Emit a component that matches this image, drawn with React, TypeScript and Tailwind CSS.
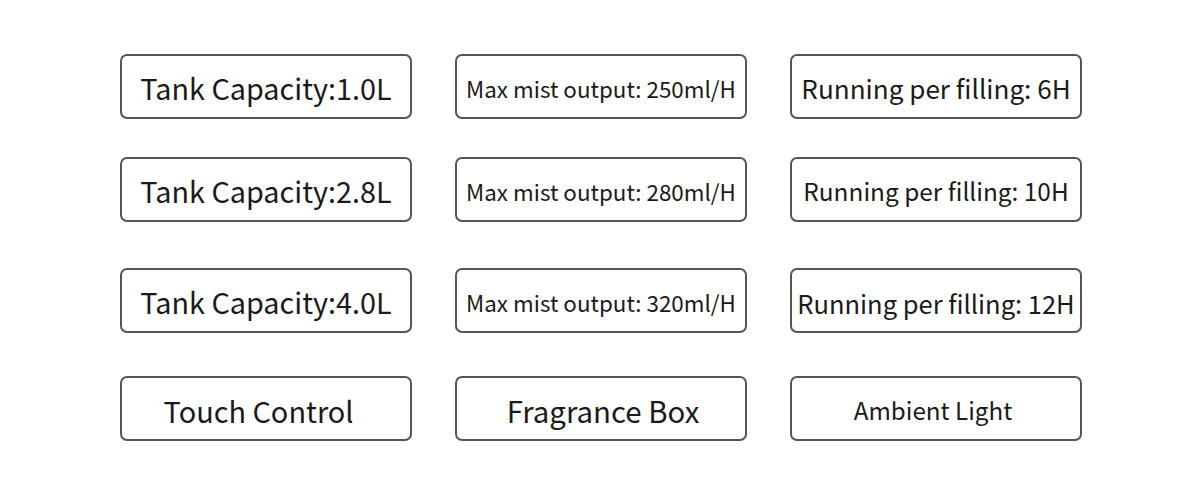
import React from "react";

type Item = { text: string; cls: string };

const rows: { mt: string; items: Item[] }[] = [
  {
    mt: "mt-[54px]",
    items: [
      { text: "Tank Capacity:1.0L", cls: "text-[28.8px]" },
      { text: "Max mist output: 250ml/H", cls: "text-[22.4px]" },
      { text: "Running per filling: 6H", cls: "text-[26.1px]" },
    ],
  },
  {
    mt: "mt-[38px]",
    items: [
      { text: "Tank Capacity:2.8L", cls: "text-[28.8px]" },
      { text: "Max mist output: 280ml/H", cls: "text-[22.4px]" },
      { text: "Running per filling: 10H", cls: "text-[24.4px]" },
    ],
  },
  {
    mt: "mt-[46px]",
    items: [
      { text: "Tank Capacity:4.0L", cls: "text-[28.8px]" },
      { text: "Max mist output: 320ml/H", cls: "text-[22.4px]" },
      { text: "Running per filling: 12H", cls: "text-[25.5px]" },
    ],
  },
  {
    mt: "mt-[43px]",
    items: [
      { text: "Touch Control", cls: "text-[28.9px] pr-[15px]" },
      { text: "Fragrance Box", cls: "text-[29.4px] pl-[4px]" },
      { text: "Ambient Light", cls: "text-[24.2px] pr-[6px]" },
    ],
  },
];

export default function App() {
  return (
    <div
      className="w-[1180px] h-[500px] bg-white pl-[120px] overflow-hidden"
      style={{ fontFamily: '"Noto Sans CJK JP", "Noto Sans", sans-serif' }}
    >
      {rows.map((r, i) => (
        <div key={i} className={`${r.mt} flex gap-[43px]`}>
          {r.items.map((it, j) => (
            <div
              key={j}
              className={`w-[292px] h-[65px] border-2 border-[#555555] rounded-[7px] flex items-center justify-center pt-[4px] text-[#1a1a1a] leading-none whitespace-nowrap ${it.cls}`}
            >
              {it.text}
            </div>
          ))}
        </div>
      ))}
    </div>
  );
}
